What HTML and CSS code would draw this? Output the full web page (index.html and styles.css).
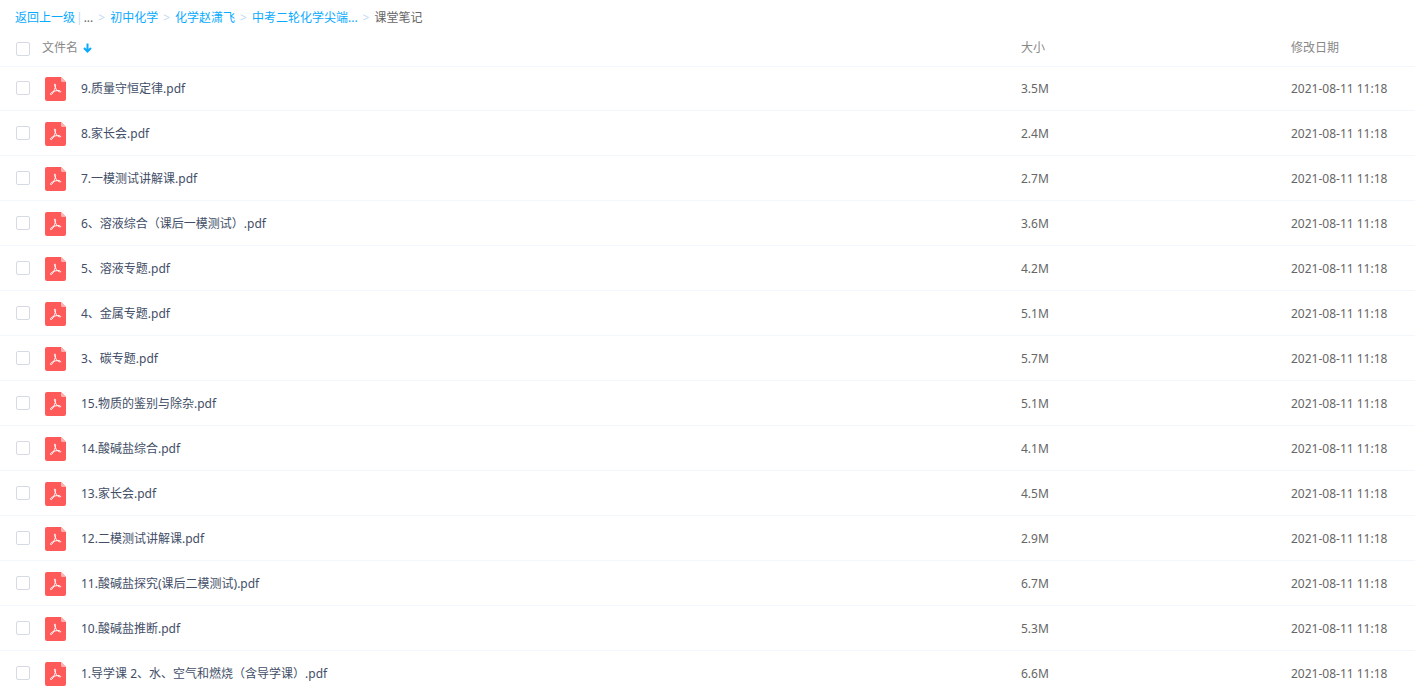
FILE: index.html
```html
<!DOCTYPE html>
<html lang="zh-CN">
<head>
    <meta charset="UTF-8">
    <meta name="viewport" content="width=device-width, initial-scale=1.0">
    <title>课堂笔记</title>
    <link rel="stylesheet" href="styles.css">
</head>
<body>
    <nav class="breadcrumb">
        <a href="#">返回上一级</a>
        <span class="divider">|</span>
        <span class="more">...</span>
        <span class="arrow">&gt;</span>
        <a href="#">初中化学</a>
        <span class="arrow">&gt;</span>
        <a href="#">化学赵潇飞</a>
        <span class="arrow">&gt;</span>
        <a href="#">中考二轮化学尖端...</a>
        <span class="arrow">&gt;</span>
        <span class="current">课堂笔记</span>
    </nav>

    <table class="file-list">
        <thead>
            <tr>
                <th class="col-name">
                    <div class="head-cell">
                        <input type="checkbox" class="check" aria-label="全选">
                        <span>文件名</span>
                        <svg class="sort-icon" viewBox="0 0 9 10" aria-hidden="true">
                            <path d="M4.5 0.5V8M1 5L4.5 8.5L8 5" fill="none" stroke="#09aaff" stroke-width="2"/>
                        </svg>
                    </div>
                </th>
                <th class="col-size">大小</th>
                <th class="col-date">修改日期</th>
            </tr>
        </thead>
        <tbody id="fileRows"></tbody>
    </table>

    <svg class="symbols" aria-hidden="true">
        <symbol id="pdf" viewBox="0 0 21 24">
            <path d="M2 0H16L21 5V22Q21 24 19 24H2Q0 24 0 22V2Q0 0 2 0Z" fill="#ff5a5a"/>
            <path d="M16 0L21 5H17.5Q16 5 16 3.5Z" fill="#ffb2b2"/>
            <path d="M9.9 7C9.2 7 9.2 8.1 9.9 9.3C10.5 10.5 11 12.4 12.4 13.7C13.5 14.7 15.5 15.4 15.7 14.6C15.9 13.7 13.3 13.3 10.9 13.8C8.8 14.2 5.8 15.4 5.5 16.9C5.4 18 6.8 17.8 7.8 16.1C9 14.1 10.7 10.5 10.6 8.5C10.6 7.5 10.4 7 9.9 7Z" fill="none" stroke="#fff" stroke-width="1" stroke-linejoin="round"/>
        </symbol>
    </svg>

    <script src="script.js"></script>
</body>
</html>
```

FILE: styles.css
```css
* {
    margin: 0;
    padding: 0;
    box-sizing: border-box;
}

body {
    font-family: 'Noto Sans', 'Noto Sans CJK SC', sans-serif;
    font-size: 12px;
    line-height: 18px;
    color: #424e67;
    background: #fff;
}

a {
    color: #09aaff;
    text-decoration: none;
}

.breadcrumb {
    display: flex;
    align-items: center;
    height: 30px;
    padding: 5px 15px 0;
    white-space: nowrap;
}

.divider {
    margin: 0 1px;
    color: #c4d8f4;
}

.arrow {
    margin: 0 5px;
    color: #c4d8f4;
}

.more,
.current {
    color: #666;
}

.file-list {
    width: 100%;
    table-layout: fixed;
    border-collapse: separate;
    border-spacing: 0;
}

.file-list th {
    height: 36px;
    font-weight: normal;
    text-align: left;
    color: #888;
}

.file-list td {
    height: 45px;
    padding-top: 2px;
    border-top: 1px solid #f2f6fd;
    color: #666;
}

/* the first row is one pixel shorter than the rest */
.file-list tbody tr:first-child td {
    height: 44px;
    padding-top: 1px;
}

.col-size {
    width: 270px;
}

.col-date {
    width: 124px;
}

.head-cell,
.name-cell {
    display: flex;
    align-items: center;
    padding-left: 16px;
}

.head-cell {
    gap: 12px;
}

.check {
    appearance: none;
    flex: none;
    width: 14px;
    height: 14px;
    border: 1px solid #d5dae4;
    border-radius: 2px;
    background: #fff;
    cursor: pointer;
}

.head-cell .check {
    margin-top: 2px;
}

.name-cell .check {
    margin-bottom: 2px;
}

.check:checked {
    border-color: #09aaff;
    background: #09aaff;
}

.sort-icon {
    width: 9px;
    height: 10px;
    margin-left: -7px;
}

.file-icon {
    flex: none;
    width: 21px;
    height: 24px;
    margin: 0 15px;
}

.file-name {
    color: #424e67;
    cursor: pointer;
}

.file-name:hover {
    color: #09aaff;
}

.symbols {
    display: none;
}
```

FILE: script.js
```js
const files = [
    ['9.质量守恒定律.pdf', '3.5M'],
    ['8.家长会.pdf', '2.4M'],
    ['7.一模测试讲解课.pdf', '2.7M'],
    ['6、溶液综合（课后一模测试）.pdf', '3.6M'],
    ['5、溶液专题.pdf', '4.2M'],
    ['4、金属专题.pdf', '5.1M'],
    ['3、碳专题.pdf', '5.7M'],
    ['15.物质的鉴别与除杂.pdf', '5.1M'],
    ['14.酸碱盐综合.pdf', '4.1M'],
    ['13.家长会.pdf', '4.5M'],
    ['12.二模测试讲解课.pdf', '2.9M'],
    ['11.酸碱盐探究(课后二模测试).pdf', '6.7M'],
    ['10.酸碱盐推断.pdf', '5.3M'],
    ['1.导学课 2、水、空气和燃烧（含导学课）.pdf', '6.6M']
];

document.getElementById('fileRows').innerHTML = files.map(([name, size], i) => `
    <tr>
        <td>
            <div class="name-cell">
                <input type="checkbox" class="check" id="file${i}">
                <svg class="file-icon" aria-hidden="true"><use href="#pdf"/></svg>
                <label class="file-name" for="file${i}">${name}</label>
            </div>
        </td>
        <td>${size}</td>
        <td>2021-08-11 11:18</td>
    </tr>
`).join('');
```
